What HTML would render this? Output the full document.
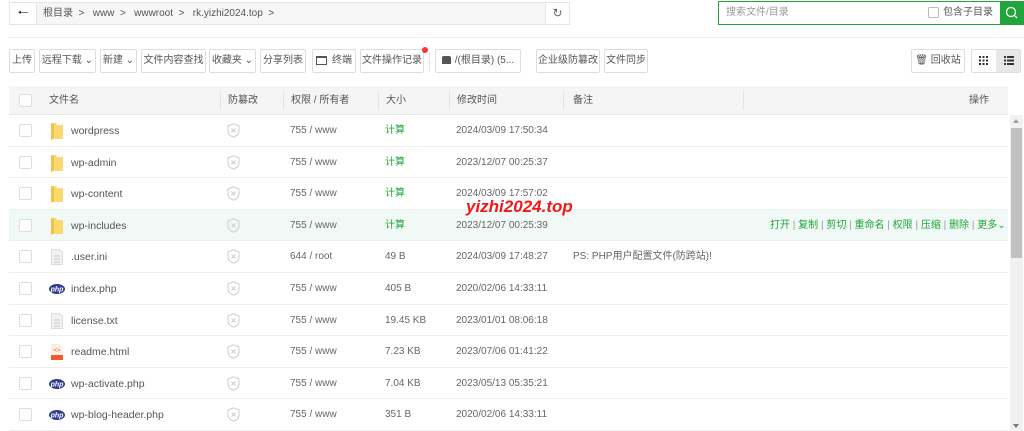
<!DOCTYPE html><html><head><meta charset="utf-8"><style>
*{box-sizing:border-box;margin:0;padding:0}
body{width:1024px;height:431px;overflow:hidden;background:#fff;font-family:"Liberation Sans","Noto Sans CJK SC",sans-serif;font-size:10px;color:#555;position:relative}
.a{position:absolute}
.btn{position:absolute;top:49px;height:24px;border:1px solid #ddd;border-radius:2px;background:#fff;line-height:22px;text-align:center;color:#555;font-size:10px;white-space:nowrap}
.hd{position:absolute;top:86px;left:9px;width:999px;height:29px;background:#f5f5f5;border-bottom:1px solid #e8e8e8}
.hd span{position:absolute;top:0;line-height:30px;color:#555}
.sep{position:absolute;top:5px;width:1px;height:19px;background:#e3e3e3}
.row{position:absolute;left:9px;width:999px;height:31.6px;border-bottom:1px solid #eee}
.row span{position:absolute;top:0;line-height:32px;white-space:nowrap;color:#666}
.row span.g{color:#20a53a}
.cb{position:absolute;left:10px;top:9px;width:13px;height:13px;border:1px solid #ddd;border-radius:2px;background:#fff}
</style></head><body>
<div class="a" style="left:9px;top:2px;width:561px;height:23px;border:1px solid #e5e5e5;background:#f6f6f6"></div>
<div class="a" style="left:10px;top:3px;width:27px;height:21px;background:#fff;border-right:1px solid #e5e5e5;text-align:center;line-height:20px;font-size:13px;color:#333">&#129040;</div>
<div class="a" style="left:43px;top:3px;line-height:21px;color:#555;font-size:10px;white-space:nowrap">根目录 &nbsp;&gt;&nbsp;&nbsp; www &nbsp;&gt;&nbsp;&nbsp; wwwroot &nbsp;&gt;&nbsp;&nbsp; rk.yizhi2024.top &nbsp;&gt;</div>
<div class="a" style="left:545px;top:3px;width:24px;height:21px;background:#fff;border-left:1px solid #e5e5e5;text-align:center;line-height:20px;font-size:12px;color:#666">&#8635;</div>
<div class="a" style="left:718px;top:1px;width:283px;height:24px;border:1px solid #20a53a;background:#fff"></div>
<div class="a" style="left:726px;top:1px;line-height:24px;color:#999">搜索文件/目录</div>
<div class="a" style="left:928px;top:7px;width:11px;height:11px;border:1px solid #bbb;border-radius:2px"></div>
<div class="a" style="left:943px;top:1px;line-height:24px;color:#555">包含子目录</div>
<div class="a" style="left:1000px;top:1px;width:24px;height:24px;background:#20a53a"><svg width="24" height="24"><circle cx="11" cy="11" r="4.5" fill="none" stroke="#fff" stroke-width="1.3"/><line x1="14.3" y1="14.3" x2="17" y2="17" stroke="#fff" stroke-width="1.3"/></svg></div>
<div class="a" style="left:9px;top:37px;width:1015px;height:1px;background:#eee"></div>
<div class="btn" style="left:9px;width:26px">上传</div>
<div class="btn" style="left:39px;width:57px">远程下载 &#8964;</div>
<div class="btn" style="left:100px;width:37px">新建 &#8964;</div>
<div class="btn" style="left:141px;width:65px">文件内容查找</div>
<div class="btn" style="left:209px;width:47px">收藏夹 &#8964;</div>
<div class="btn" style="left:260px;width:46px">分享列表</div>
<div class="btn" style="left:312px;width:44px"><span style="display:inline-block;width:11px;height:9px;border:1px solid #555;border-top-width:2px;vertical-align:middle;margin-right:5px"></span>终端</div>
<div class="btn" style="left:360px;width:64px">文件操作记录</div>
<div class="a" style="left:422px;top:47px;width:6px;height:6px;border-radius:3px;background:#f33"></div>
<div class="a" style="left:429px;top:52px;width:1px;height:18px;background:#e5e5e5"></div>
<div class="btn" style="left:435px;width:86px"><span style="display:inline-block;width:9px;height:8px;background:#555;border-radius:2px 2px 0 0;vertical-align:middle;margin-right:4px"></span>/(根目录) (5...</div>
<div class="btn" style="left:536px;width:64px">企业级防篡改</div>
<div class="btn" style="left:604px;width:44px">文件同步</div>
<div class="btn" style="left:911px;width:54px">&#128465; 回收站</div>
<div class="btn" style="left:971px;width:50px;padding:0"></div>
<div class="a" style="left:996px;top:50px;width:24px;height:22px;background:#e8e8e8"></div>
<svg class="a" style="left:979px;top:56px" width="9" height="9"><g fill="#333"><rect x="0" y="0" width="2" height="2"/><rect x="3.5" y="0" width="2" height="2"/><rect x="7" y="0" width="2" height="2"/><rect x="0" y="3.5" width="2" height="2"/><rect x="3.5" y="3.5" width="2" height="2"/><rect x="7" y="3.5" width="2" height="2"/><rect x="0" y="7" width="2" height="2"/><rect x="3.5" y="7" width="2" height="2"/><rect x="7" y="7" width="2" height="2"/></g></svg>
<svg class="a" style="left:1004px;top:56px" width="10" height="9"><g fill="#333"><rect x="0" y="0" width="2" height="2"/><rect x="3" y="0" width="7" height="2"/><rect x="0" y="3.5" width="2" height="2"/><rect x="3" y="3.5" width="7" height="2"/><rect x="0" y="7" width="2" height="2"/><rect x="3" y="7" width="7" height="2"/></g></svg>
<div class="hd">
<div class="cb" style="top:8px"></div>
<span style="left:40px">文件名</span>
<div class="sep" style="left:211px"></div><span style="left:219px">防篡改</span>
<div class="sep" style="left:274px"></div><span style="left:282px">权限 / 所有者</span>
<div class="sep" style="left:369px"></div><span style="left:377px">大小</span>
<div class="sep" style="left:440px"></div><span style="left:448px">修改时间</span>
<div class="sep" style="left:554px"></div><span style="left:564px">备注</span>
<div class="sep" style="left:734px"></div><span style="left:960px">操作</span>
</div>
<div id="rows"></div>
<div class="a" style="left:466px;top:197px;color:#f01818;font-size:17px;font-style:italic;font-weight:bold;font-family:'Liberation Sans',sans-serif">yizhi2024.top</div>
<div class="a" style="left:1010px;top:115px;width:13px;height:316px;background:#f1f1f1"></div>
<div class="a" style="left:1011px;top:128px;width:11px;height:130px;background:#c1c1c1"></div>
<div class="a" style="left:1013px;top:119px;width:0;height:0;border:3px solid transparent;border-bottom:4px solid #a0a0a0;border-top:0"></div>
<div class="a" style="left:1013px;top:424px;width:0;height:0;border:3px solid transparent;border-top:4px solid #777;border-bottom:0"></div>
<script>
var d=[["f","wordpress","755 / www","计算","2024/03/09 17:50:34",""],
["f","wp-admin","755 / www","计算","2023/12/07 00:25:37",""],
["f","wp-content","755 / www","计算","2024/03/09 17:57:02",""],
["f","wp-includes","755 / www","计算","2023/12/07 00:25:39",""],
["t",".user.ini","644 / root","49 B","2024/03/09 17:48:27","PS: PHP用户配置文件(防跨站)!"],
["p","index.php","755 / www","405 B","2020/02/06 14:33:11",""],
["t","license.txt","755 / www","19.45 KB","2023/01/01 08:06:18",""],
["h","readme.html","755 / www","7.23 KB","2023/07/06 01:41:22",""],
["p","wp-activate.php","755 / www","7.04 KB","2023/05/13 05:35:21",""],
["p","wp-blog-header.php","755 / www","351 B","2020/02/06 14:33:11",""]];
var ic={f:'<svg width="14" height="18"><path d="M1 1h5l1 2h6v14H3l-2 1z" fill="#fbd870"/><path d="M1 1v17l3-2V2z" fill="#f0c14b"/></svg>',
t:'<svg width="12" height="16"><path d="M0.5 0.5h8l3 3v12h-11z" fill="#f2f2f2" stroke="#ddd"/><g stroke="#ccc"><line x1="3" y1="7" x2="9" y2="7"/><line x1="3" y1="10" x2="9" y2="10"/><line x1="3" y1="13" x2="9" y2="13"/></g></svg>',
p:'<svg width="16" height="10"><ellipse cx="8" cy="5" rx="8" ry="5" fill="#2f3a8f"/><text x="8" y="7.5" font-size="7" fill="#fff" text-anchor="middle" font-family="Liberation Sans" font-style="italic" font-weight="bold">php</text></svg>',
h:'<svg width="12" height="16"><path d="M0 0h9l3 3v13H0z" fill="#f9efe6"/><rect x="0" y="11" width="12" height="5" fill="#f0592a"/><text x="6" y="8" font-size="6" fill="#f0592a" text-anchor="middle">&lt;&gt;</text></svg>'};
var h="";var S='<span style="position:static;color:#999">|</span>';
d.forEach(function(r,i){var t=115+i*31.6;var hl=i==3;
var pos=r[0]=="p"?'left:40px;top:11px':(r[0]=="f"?'left:41px;top:7px':'left:42px;top:8px');
h+='<div class="row" style="top:'+t+'px;'+(hl?'background:#f1f9f6;':'')+'"><div class="cb"></div><div class="a" style="'+pos+'">'+ic[r[0]]+'</div>'+
'<span style="left:62px;color:#555;font-size:10.5px">'+r[1]+'</span>'+
'<svg class="a" style="left:218px;top:8px" width="13" height="15"><path d="M6.5 0.8L12 3v5c0 3-2.5 5-5.5 6.2C3.5 13 1 11 1 8V3z" fill="none" stroke="#ccc"/><path d="M4.5 5.5l4 4M8.5 5.5l-4 4" stroke="#ccc"/></svg>'+
'<span style="left:281px">'+r[2]+'</span>'+
'<span style="left:376px" class="'+(r[3]=="计算"?"g":"")+'">'+r[3]+'</span>'+
'<span style="left:447px">'+r[4]+'</span>'+
'<span style="left:564px">'+r[5]+'</span>'+
(hl?'<span class="g" style="left:761px">打开 '+S+' 复制 '+S+' 剪切 '+S+' 重命名 '+S+' 权限 '+S+' 压缩 '+S+' 删除 '+S+' 更多&#8964;</span>':'')+
'</div>';});
document.getElementById("rows").innerHTML=h;
</script>
</body></html>
